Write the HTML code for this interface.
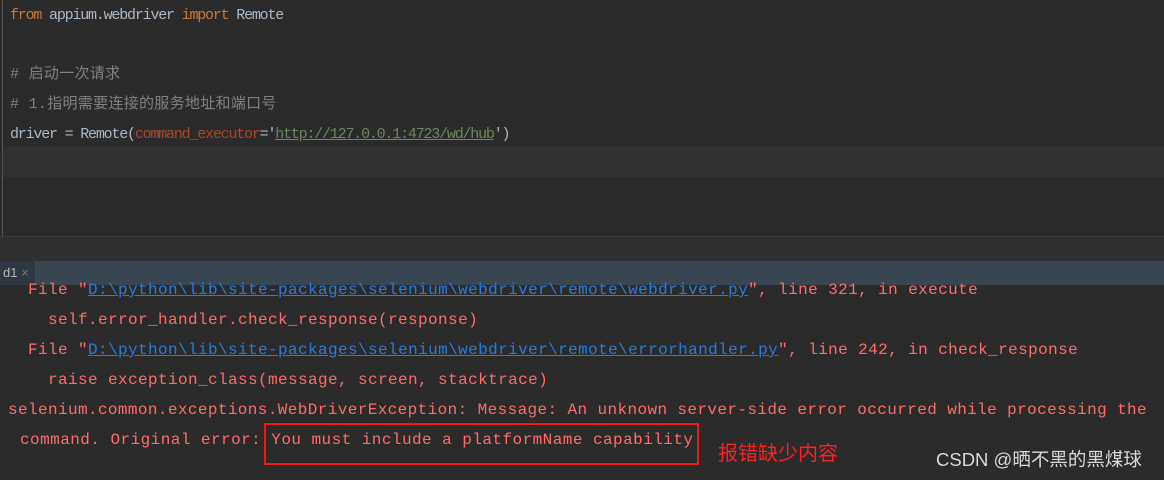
<!DOCTYPE html>
<html><head><meta charset="utf-8"><style>
body{margin:0;width:1164px;height:480px;background:#2b2b2b;overflow:hidden;position:relative;font-family:"Liberation Mono","Noto Sans CJK SC",monospace}
.l{position:absolute;white-space:pre;line-height:20px}
.t{font-size:15px;letter-spacing:-1.2px;color:#a9b7c6}
.c{font-size:16px;letter-spacing:0.4px;color:#ff6b68}
.k{color:#cc7832}.p{color:#aa4926}.s{color:#6a8759;text-decoration:underline;text-decoration-color:#6a8759}
.cm{color:#808080;letter-spacing:0.3px}
.u{color:#287bde;text-decoration:underline}
</style></head><body>
<div style="position:absolute;left:2px;top:0;width:1px;height:236px;background:#555"></div>
<div style="position:absolute;left:3px;top:147px;width:1161px;height:30px;background:#323232"></div>
<div style="position:absolute;left:0;top:236px;width:1164px;height:26px;background:#2e3032;border-top:1px solid #3a3a3a"></div>
<div style="position:absolute;left:0;top:261px;width:1164px;height:24px;background:#3a4552"></div>
<div style="position:absolute;left:0;top:261px;width:35px;height:24px;background:#2f3842"></div>
<div class="l" style="left:3px;top:263px;font-family:'Liberation Sans',sans-serif;font-size:13px;color:#bbb">d1 <span style="color:#777">×</span></div>
<div class="l t" style="left:10px;top:6px"><span class="k">from</span> appium.webdriver <span class="k">import</span> Remote</div>
<div class="l t cm" style="left:10px;top:65px"># 启动一次请求</div>
<div class="l t cm" style="left:10px;top:95px"># 1.指明需要连接的服务地址和端口号</div>
<div class="l t" style="left:10px;top:125px">driver = Remote(<span class="p">command_executor</span>='<span class="s">http://127.0.0.1:4723/wd/hub</span>')</div>
<div class="l c" style="left:28px;top:280px">File "<span class="u">D:\python\lib\site-packages\selenium\webdriver\remote\webdriver.py</span>", line 321, in execute</div>
<div class="l c" style="left:48px;top:310px">self.error_handler.check_response(response)</div>
<div class="l c" style="left:28px;top:340px">File "<span class="u">D:\python\lib\site-packages\selenium\webdriver\remote\errorhandler.py</span>", line 242, in check_response</div>
<div class="l c" style="left:48px;top:370px">raise exception_class(message, screen, stacktrace)</div>
<div class="l c" style="left:8px;top:400px;letter-spacing:0.39px">selenium.common.exceptions.WebDriverException: Message: An unknown server-side error occurred while processing the</div>
<div class="l c" style="left:20px;top:430px;letter-spacing:0.45px">command. Original error: You must include a platformName capability</div>
<div style="position:absolute;left:264px;top:423px;width:431px;height:38px;border:2px solid #f01818"></div>
<div class="l" style="left:718px;top:439px;font-family:'Noto Sans CJK SC',sans-serif;font-size:20px;line-height:26px;color:#ff2020">报错缺少内容</div>
<div class="l" style="left:936px;top:448px;font-family:'Liberation Sans','Noto Sans CJK SC',sans-serif;font-size:18.5px;line-height:24px;color:#d8d8d8">CSDN @晒不黑的黑煤球</div>
</body></html>
